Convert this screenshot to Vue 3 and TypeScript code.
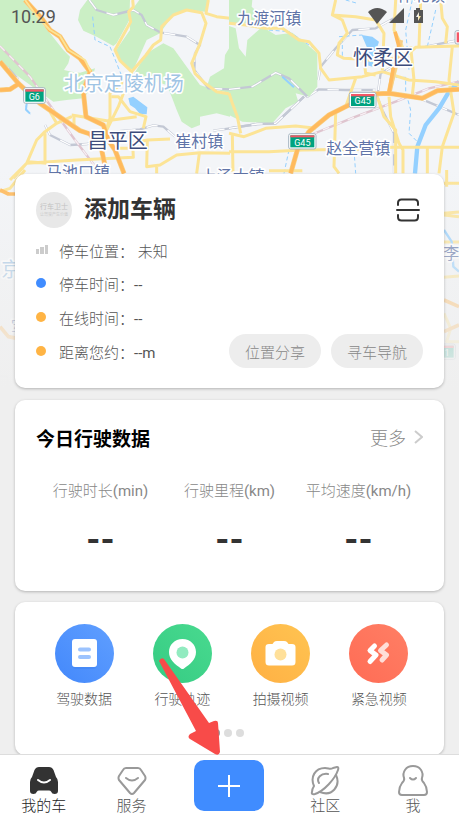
<script setup lang="ts">
interface StatusRow {
  label: string
  value: string
  mark: 'signal' | 'blue' | 'orange'
}

interface Metric {
  label: string
  unit: string
  value: string
}

const statusRows: StatusRow[] = [
  { label: '停车位置：', value: ' 未知', mark: 'signal' },
  { label: '停车时间：', value: '--', mark: 'blue' },
  { label: '在线时间：', value: '--', mark: 'orange' },
  { label: '距离您约：', value: '--m', mark: 'orange' },
]

const metrics: Metric[] = [
  { label: '行驶时长', unit: '(min)', value: '--' },
  { label: '行驶里程', unit: '(km)', value: '--' },
  { label: '平均速度', unit: '(km/h)', value: '--' },
]
</script>

<template>
  <div class="app">
    <svg class="map" viewBox="0 0 1377 1170" preserveAspectRatio="xMidYMin slice" aria-hidden="true">
      <defs>
        <linearGradient id="mapFade" x1="0" y1="0" x2="0" y2="1">
          <stop offset="0" stop-color="#efefef" stop-opacity="0" />
          <stop offset="0.5" stop-color="#efefef" stop-opacity="0.55" />
          <stop offset="1" stop-color="#efefef" />
        </linearGradient>
      </defs>
      <rect width="1377" height="1170" fill="#f3f5f8" />

      <!-- western half -->
      <g class="park">
        <path d="M0 0H75L108 48 150 100 190 150 210 170 205 190 192 210 215 215 240 218 285 205 278 232 262 280 250 295 200 300 160 305 0 190Z" />
        <path d="M262 0H390L388 60 350 130 340 138 290 110 250 92 234 60 240 30Z" />
        <path d="M418 0H625L615 35 560 30 515 50 480 100 440 120 400 210 375 200 345 155 390 90 388 40Z" />
        <path d="M490 130L520 145 560 200 600 255 690 285 690 350 650 340 600 350 600 375 575 385 545 365 530 330 515 290 500 255 400 225 440 160Z" />
        <path d="M690 140V280L620 262 630 230 672 205 675 165Z" />
      </g>
      <path class="lake" d="M385 295L400 290 442 322 440 343 420 342 405 325 390 315Z" />
      <path class="stream" d="M80 310L76 330 92 343M278 50L285 120 330 140 350 190 366 230" />
      <path class="stream thick" d="M80 312L78 328 90 341" />
      <g v-for="layer in ['rail', 'rail-gap']" :key="layer" :class="layer">
        <path d="M268 0L290 30 340 45 400 30 425 45 440 75 480 97 560 110 600 135 585 160 583 210 625 265 690 268" />
        <path d="M135 375L150 405 210 435 262 432 340 395 420 388 460 376 490 380 525 410M640 392L690 385M0 185L25 205 55 238" />
        <path transform="translate(687 0)" d="M0 268L70 260 140 218 180 235 235 290 270 268 350 270 440 270M0 385L85 372 140 370 225 290M268 240L275 200 320 145 370 90 440 85 500 52M500 195L455 220 445 290 460 330 495 400V520M560 290L690 345M590 140L690 120" />
      </g>
      <path class="dash-base" d="M0 138L90 230 160 330 225 420 290 505" />
      <path class="dash" d="M0 138L90 230 160 330 225 420 290 505" />
      <path class="road" d="M398 0L400 20 386 35 392 65 345 150 360 182 395 215 438 165 460 135 482 120 485 80 520 45 560 30 605 38 618 70 600 130 575 190 585 220 615 250 650 275 690 282M625 0L618 40 650 50 690 55M395 215L370 245 330 280 330 355 315 400M335 290H355L390 335 438 350 430 385M395 215L355 320 320 390M215 345L320 362 410 350M40 535L80 490 110 420 135 395 170 370 215 350M80 490L230 480 400 472 398 430 442 420 510 417M442 420L440 500 480 495 530 465 600 458 690 460M598 460L590 520M470 500V520M360 445H400M30 540L85 485 140 490M135 400V485M150 335L170 370M222 345V380" />
      <path class="highway casing" d="M75 0L125 55 150 90 180 110 205 150 240 175 270 215 250 275 258 350 310 375 325 420 345 450 372 520M0 185L55 250 120 310 200 365 240 392 270 402 305 450 320 520M0 270L30 268 55 252" />
      <path class="highway" d="M75 0L125 55 150 90 180 110 205 150 240 175 270 215 250 275 258 350 310 375 325 420 345 450 372 520M0 185L55 250 120 310 200 365 240 392 270 402 305 450 320 520M0 270L30 268 55 252" />
      <path class="road edge" d="M75 0L110 48 150 90 180 108 205 150 255 180 272 215" />

      <!-- eastern half -->
      <g transform="translate(687 0)">
        <g class="park">
          <path d="M0 0H70L68 20 95 45 75 70 0 70Z" />
          <path d="M0 78L20 85 30 145 50 170 55 120 100 80 140 105 190 98 225 125 265 160 265 260 240 290 200 280 208 305 170 325 130 370 40 365 0 345Z" />
        </g>
        <g class="rail"><path d="M0 268L70 260 140 218 180 235 235 290M0 385L85 372 140 370 225 290" /></g>
        <g class="rail-gap"><path d="M0 268L70 260 140 218 180 235 235 290M0 385L85 372 140 370 225 290" /></g>
        <path class="lake" d="M398 105L430 110 450 125 440 155 430 200 412 195 415 145Z" />
        <path class="river" d="M690 245L660 275 630 325 590 375 565 440 558 520" />
        <path class="stream" d="M500 232H530V275L545 330 540 400 570 430M120 90L180 95 270 155M340 115V175H400M330 110L400 105M620 30L595 140M550 0L530 90 540 210M350 0L385 10M180 450L165 520M375 450L380 520" />
        <path class="stream thick" d="M160 230L195 262" />
        <path class="dash-base" d="M245 405L380 350 500 305 600 265 690 245" />
        <path class="dash" d="M245 405L380 350 500 305 600 265 690 245" />
        <path class="road" d="M0 70L50 75 110 85 160 85 210 120 240 125 270 160 275 205 300 240 400 230 460 215 540 240 620 245 690 255M320 0L310 45 340 60 355 100 330 130 325 165 345 175 400 178 460 185 540 160 560 142 690 138M310 45L380 50 440 60 465 100 460 210M380 235L350 320M405 180L410 220 440 225M545 140L555 240 550 285M670 140L660 240 675 340 640 440 630 520M575 0L570 140M635 0L640 55 655 80 650 130M0 400L45 410 110 385 200 378 260 385M0 455H120L220 450 390 448 490 442 690 442M320 340L315 500 330 520M10 400L12 520M0 280L10 310 25 350 35 400M445 290L465 350 500 390V520M480 290L485 350 510 430 522 450V520M595 442V520M120 512H220" />
        <path class="road" d="M500 0L495 90 520 140 480 280" />
        <path class="highway casing" d="M185 520L205 450 240 395 300 345 370 310 430 282 480 280 580 295 625 272 690 268M515 120L480 280" />
        <path class="highway" d="M185 520L205 450 240 395 300 345 370 310 430 282 480 280 580 295 625 272 690 268M498 95L510 140M495 190L480 280" />
      </g>

      <!-- edges beside the vehicle card -->
      <path class="road" d="M0 575L30 565 75 510M1332 640L1377 636M1332 645L1377 650M1332 726H1377M1332 832L1377 828M1332 940L1352 985 1340 1025H1377M1340 510V560M1332 550H1377" />
      <path class="highway" d="M0 570L25 582 50 582M0 980L25 1010 50 1015M1332 900L1377 920M1332 995L1377 975" />
      <path class="river narrow" d="M1332 690L1355 725 1360 800 1377 815" />
      <g class="rail faint"><path d="M0 1128H22V1170" /></g>

      <g class="places">
        <text x="191" y="273" class="airport">北京定陵机场</text>
        <text x="263" y="445" class="district">昌平区</text>
        <text x="526" y="440" class="town">崔村镇</text>
        <text x="138" y="535" class="town">马池口镇</text>
        <text x="602" y="546" class="town">上汤大镇</text>
        <text x="712" y="73" class="town">九渡河镇</text>
        <text x="1192" y="3" class="town">怀北镇</text>
        <text x="1059" y="194" class="district">怀柔区</text>
        <text x="979" y="461" class="town">赵全营镇</text>
        <text x="1330" y="777" class="town">李</text>
        <text x="4" y="831" class="airport">京</text>
        <text x="32" y="998" class="town">军</text>
      </g>
      <g class="shields">
        <rect x="71" y="263" width="65" height="47" rx="6" />
        <path d="M76 268H131V305H76Z" /><path class="band" d="M76 268H131V275H76Z" />
        <text x="103" y="300">G6</text>
        <rect x="866" y="401" width="82" height="46" rx="6" />
        <path d="M871 406H943V442H871Z" /><path class="band" d="M871 406H943V412H871Z" />
        <text x="907" y="437">G45</text>
        <rect x="1048" y="277" width="80" height="46" rx="6" />
        <path d="M1053 282H1123V318H1053Z" /><path class="band" d="M1053 282H1123V289H1053Z" />
        <text x="1088" y="313">G45</text>
        <rect x="1318" y="1032" width="48" height="46" rx="6" />
        <path d="M1320 1037H1361V1073H1320Z" /><path class="band" d="M1320 1037H1361V1044H1320Z" />
        <text x="1341" y="1068">1</text>
        <rect x="1365" y="92" width="40" height="40" rx="6" />
        <path class="band" d="M1370 97H1400V127H1370Z" />
      </g>
      <rect y="510" width="1377" height="660" fill="url(#mapFade)" />
    </svg>

    <header class="status-bar">
      <time>10:29</time>
      <svg class="status-icons" width="57" height="18" viewBox="0 0 57 18" aria-hidden="true">
        <path d="M0 5Q9 -3 19 5L9 17Z" />
        <path d="M36 1V16H21Z" />
        <path fill-rule="evenodd" d="M48 1H52V3H55V16H46V3H48ZM51 5L48 10H50V14L53 9H51Z" />
      </svg>
    </header>

    <main class="content">
      <section class="card vehicle">
        <div class="vehicle-head">
          <span class="avatar"><b>行车卫士</b><small>让驾驶产生价值</small></span>
          <h1>添加车辆</h1>
          <button class="scan" type="button" aria-label="扫一扫">
            <svg width="24" height="24" viewBox="0 0 24 24">
              <path d="M2 7V5Q2 1.500 5.500 1.500H18.500Q22 1.500 22 5V7M1 12H23M2 17V19Q2 22.500 5.500 22.500H18.500Q22 22.500 22 19V17" />
            </svg>
          </button>
        </div>
        <div class="vehicle-body">
          <ul>
            <li v-for="row in statusRows" :key="row.label">
              <svg v-if="row.mark === 'signal'" class="signal" width="12" height="10" viewBox="0 0 12 10" aria-hidden="true">
                <path d="M0 4H3V9H0ZM4 2H8V9H4ZM9 0H12V9H9Z" />
              </svg>
              <i v-else class="dot" :class="row.mark"></i>
              <span class="row-text">{{ row.label }}<span :class="{ latin: row.mark !== 'signal' }">{{ row.value }}</span></span>
            </li>
          </ul>
          <div class="actions">
            <button type="button">位置分享</button>
            <button type="button">寻车导航</button>
          </div>
        </div>
      </section>

      <section class="card today">
        <div class="today-head">
          <h2>今日行驶数据</h2>
          <a href="#more">更多
            <svg width="9" height="14" viewBox="0 0 9 14" aria-hidden="true"><path d="M1 1L8 7 1 13" /></svg>
          </a>
        </div>
        <dl>
          <div v-for="metric in metrics" :key="metric.label">
            <dt>{{ metric.label }}<span class="latin">{{ metric.unit }}</span></dt>
            <dd>{{ metric.value }}</dd>
          </div>
        </dl>
      </section>

      <section class="card shortcuts">
        <div class="shortcut-list">
          <button type="button">
            <svg viewBox="0 0 59 59" aria-hidden="true">
              <defs><linearGradient id="blue" x1="0" y1="1" x2="1" y2="0"><stop stop-color="#4388fb" /><stop offset="1" stop-color="#609fff" /></linearGradient></defs>
              <circle cx="29.500" cy="29.500" r="29.500" fill="url(#blue)" />
              <rect x="17" y="16" width="25" height="29" rx="4" fill="#3d7fee" opacity=".4" />
              <rect x="17" y="15" width="25" height="28" rx="3" fill="#fff" />
              <path d="M25 25.500H34M25 33H34" stroke="#9cc3fe" stroke-width="4" stroke-linecap="round" />
            </svg>
            <span>驾驶数据</span>
          </button>
          <button type="button">
            <svg viewBox="0 0 59 59" aria-hidden="true">
              <defs><linearGradient id="green" x1="0" y1="1" x2="1" y2="0"><stop stop-color="#35cb83" /><stop offset="1" stop-color="#49da8f" /></linearGradient></defs>
              <circle cx="29.500" cy="29.500" r="29.500" fill="url(#green)" />
              <path d="M29.500 15C21.500 15 16 21 16 28C16 36 22 40 28 44.500Q29.500 45.500 31 44.500C37 40 43 36 43 28C43 21 37.500 15 29.500 15Z" fill="#fff" />
              <circle cx="29.500" cy="28.500" r="6" fill="#92ebc0" />
            </svg>
            <span>行驶轨迹</span>
          </button>
          <button type="button">
            <svg viewBox="0 0 59 59" aria-hidden="true">
              <defs><linearGradient id="amber" x1="0" y1="1" x2="1" y2="0"><stop stop-color="#ffb044" /><stop offset="1" stop-color="#ffc451" /></linearGradient></defs>
              <circle cx="29.500" cy="29.500" r="29.500" fill="url(#amber)" />
              <path d="M18 20H21.500L23 18Q24 17 26 17H33Q35 17 36 18L37.500 20H41Q44.500 20 44.500 23V38Q44.500 41.500 41 41.500H18Q14.500 41.500 14.500 38V23Q14.500 20 18 20Z" fill="#fff" />
              <circle cx="29.500" cy="30.500" r="6" fill="#ffe09a" />
            </svg>
            <span>拍摄视频</span>
          </button>
          <button type="button">
            <svg viewBox="0 0 59 59" aria-hidden="true">
              <defs><linearGradient id="coral" x1="0" y1="1" x2="1" y2="0"><stop stop-color="#ff6c55" /><stop offset="1" stop-color="#ff7f65" /></linearGradient></defs>
              <circle cx="29.500" cy="29.500" r="29.500" fill="url(#coral)" />
              <g fill="none" stroke-width="5" stroke-linecap="round" stroke-linejoin="round">
                <path d="M25.500 22L21 26.500 27 31 21 37.500" stroke="#fff" />
                <path d="M37.500 21L31.500 26.500 37.500 31 33 36" stroke="#ffded8" />
              </g>
            </svg>
            <span>紧急视频</span>
          </button>
        </div>
        <div class="pager"><i class="current"></i><i></i><i></i></div>
      </section>
    </main>

    <nav class="tabs">
      <a href="#car" class="active">
        <svg width="30" height="30" viewBox="0 0 30 30" aria-hidden="true">
          <path d="M10 1H20Q23 1 24.500 4L27 11Q29 13 29 16V25Q29 28 25.500 28Q23 28 22 25.500Q21.500 24.500 20 24.500H10Q8.500 24.500 8 25.500Q7 28 4.500 28Q1 28 1 25V16Q1 13 3 11L5.500 4Q7 1 10 1Z" fill="#333" />
          <path d="M9 14Q15 19 21 14" fill="none" stroke="#fff" stroke-width="2" stroke-linecap="round" />
        </svg>
        <span>我的车</span>
      </a>
      <a href="#service">
        <svg class="line" width="30" height="30" viewBox="0 0 30 30" aria-hidden="true">
          <path d="M9 2H21Q23 2 24 4L28 10Q29 12 28 14L17 27Q15 29 13 27L2 14Q1 12 2 10L6 4Q7 2 9 2Z" />
          <path d="M9 12Q15 17 21 12" />
        </svg>
        <span>服务</span>
      </a>
      <button class="add" type="button" aria-label="添加">
        <svg width="24" height="24" viewBox="0 0 24 24"><path d="M12 1V23M1 12H23" /></svg>
      </button>
      <a href="#community">
        <svg class="line" width="30" height="30" viewBox="0 0 30 30" aria-hidden="true">
          <path d="M4 20C0 11 5 2 15 2C19 2 20 4 23 2L27 1Q29 1 28 4C25 13 14 25 5 28Q1 29 2 26Q2 23 4 20Z" />
          <path d="M26 9C31 20 22 31 10 26M9 17C6 12 11 7 18 8" />
        </svg>
        <span>社区</span>
      </a>
      <a href="#me">
        <svg class="line" width="30" height="31" viewBox="0 0 30 31" aria-hidden="true">
          <path d="M15 1C8 1 4 7 6 13Q7 15 4 18Q1 22 1 27Q1 30 4 30H26Q29 30 29 27Q29 22 26 18Q23 15 24 13C26 7 22 1 15 1Z" />
          <path d="M12 13Q15 16 18 13" />
        </svg>
        <span>我</span>
      </a>
    </nav>

    <svg class="pointer" width="64" height="98" viewBox="0 0 64 98" aria-hidden="true">
      <path d="M1 3Q3 -1 6 1L51 65 56 63Q60 62 60 65L62 94Q61 98 57 96L32 81Q29 79 32 76L38 73Z" />
    </svg>
  </div>
</template>

<style>
body {
  margin: 0;
  background: #efefef;
}
</style>

<style scoped>
.app {
  position: relative;
  display: flex;
  flex-direction: column;
  height: 100vh;
  overflow: hidden;
  background: #efefef;
  color: #555;
  font-family: Roboto, "Noto Sans CJK SC", sans-serif;
  font-size: 15px;
  font-weight: 300;
}
button {
  padding: 0;
  border: 0;
  background: none;
  color: inherit;
  font: inherit;
}
a {
  color: inherit;
  text-decoration: none;
}
h1, h2, ul, dl, dd {
  margin: 0;
  padding: 0;
}
.latin { font-weight: 400; }

.map {
  position: absolute;
  top: 0;
  left: 0;
  width: 100%;
  height: 390px;
}
.map path { fill: none; stroke-linejoin: round; }
.map .park path { fill: #cbefc5; }
.map .lake { fill: #94d0ff; }
.map .river { stroke: #94d0ff; stroke-width: 13; }
.map .river.narrow { stroke-width: 7; }
.map .stream { stroke: #94d0ff; stroke-width: 3; stroke-dasharray: 12 8; }
.map .stream.thick { stroke-width: 6; stroke-dasharray: none; }
.map .rail path { stroke: #c3c8d4; stroke-width: 7; }
.map .rail-gap path { stroke: #fff; stroke-width: 4; stroke-dasharray: 34 34; }
.map .rail.faint path { stroke: #e4e6ea; stroke-width: 4; }
.map .road { stroke: #fce496; stroke-width: 9; }
.map .road.edge { stroke-width: 6; }
.map .highway { stroke: #ffba5d; stroke-width: 11; }
.map .highway.casing { stroke: #f8cf85; stroke-width: 15; }
.map .dash-base { stroke: #dfc5cf; stroke-width: 7; }
.map .dash { stroke: #f6f0f4; stroke-width: 4; stroke-dasharray: 20 20; }
.places text {
  stroke: #fff;
  stroke-width: 10px;
  stroke-linejoin: round;
  paint-order: stroke;
  font-weight: 400;
}
.places .airport { font-size: 60px; fill: #9fc4e4; }
.places .district { font-size: 60px; fill: #3c4c7c; }
.places .town { font-size: 48px; fill: #6074a8; }
.shields rect { fill: #fff; stroke: #a5b5c0; stroke-width: 3; }
.shields path { fill: #00a27f; }
.shields .band { fill: #f35766; }
.shields text { fill: #fff; font-size: 27px; font-weight: 400; text-anchor: middle; }

.status-bar {
  position: relative;
  display: flex;
  flex: none;
  align-items: center;
  justify-content: space-between;
  height: 32px;
  padding: 0 34px 0 11px;
  color: #555;
  font-size: 18px;
  font-weight: 400;
}
.status-icons { fill: #555; }

.content {
  position: relative;
  flex: 1;
  min-height: 0;
  overflow: hidden;
  padding: 142px 15px 0;
}
.card {
  box-sizing: border-box;
  margin-bottom: 12px;
  padding: 18px 21px 20px;
  border-radius: 10px;
  background: #fff;
  box-shadow: 0 1px 3px rgba(0, 0, 0, 0.25);
}

.vehicle-head {
  display: flex;
  align-items: center;
  height: 36px;
  margin-bottom: 6px;
}
.avatar {
  display: flex;
  flex-direction: column;
  align-items: center;
  justify-content: center;
  width: 36px;
  height: 36px;
  overflow: hidden;
  border-radius: 50%;
  background: #e8e8e8;
  color: #c2c2c2;
  white-space: nowrap;
}
.avatar b { font-size: 7px; font-weight: 400; line-height: 9px; }
.avatar small { font-size: 4px; line-height: 6px; }
h1 {
  margin-left: 12px;
  color: #333;
  font-size: 23px;
  font-weight: 700;
  line-height: 36px;
}
.scan {
  width: 24px;
  height: 24px;
  margin-left: auto;
  margin-right: 3px;
}
.scan svg {
  display: block;
  fill: none;
  stroke: #333;
  stroke-width: 2;
  stroke-linecap: round;
}
.vehicle-body {
  display: flex;
  align-items: flex-end;
  justify-content: space-between;
}
.vehicle-body ul { list-style: none; }
.vehicle-body li {
  display: flex;
  align-items: center;
  height: 34px;
}
.vehicle-body li:first-child { height: 32px; }
.row-text {
  margin-left: 12px;
  white-space: pre;
}
.dot {
  width: 10px;
  height: 10px;
  margin-right: 1px;
  border-radius: 50%;
}
.dot.blue { background: #408cff; }
.dot.orange { background: #ffb444; }
.signal { fill: #ccc; margin-right: -1px; }
.actions {
  display: flex;
  gap: 10px;
}
.actions button {
  height: 34px;
  padding: 0 16px;
  border-radius: 17px;
  background: #ededed;
  color: #888;
}

.today {
  height: 191px;
  margin-bottom: 11px;
}
.today-head {
  display: flex;
  align-items: center;
  justify-content: space-between;
  height: 38px;
}
h2 {
  color: #000;
  font-size: 19px;
  font-weight: 700;
}
.today-head a {
  display: flex;
  align-items: center;
  gap: 8px;
  color: #888;
  font-size: 18px;
}
.today-head svg {
  fill: none;
  stroke: #ccc;
  stroke-width: 2;
}
dl {
  display: grid;
  grid-template-columns: repeat(3, 1fr);
  margin-top: 24px;
  text-align: center;
}
dt {
  color: #888;
  line-height: 22px;
  white-space: nowrap;
}
dd {
  margin-top: 17px;
  color: #333;
  font-size: 36px;
  font-weight: 700;
  line-height: 42px;
}

.shortcuts {
  height: 153px;
  padding: 22px 16px 0 20px;
}
.shortcut-list {
  display: grid;
  grid-template-columns: repeat(4, 1fr);
}
.shortcut-list button {
  display: flex;
  flex-direction: column;
  align-items: center;
  gap: 6px;
  font-size: 14px;
  line-height: 20px;
}
.shortcut-list svg {
  width: 59px;
  height: 59px;
}
.pager {
  display: flex;
  justify-content: center;
  gap: 4px;
  margin-top: 20px;
  padding-right: 8px;
}
.pager i {
  width: 8px;
  height: 8px;
  border-radius: 50%;
  background: #ddd;
}
.pager .current { background: #999; }

.tabs {
  position: relative;
  display: flex;
  flex: none;
  box-sizing: border-box;
  height: 62px;
  padding-right: 2px;
  border-top: 1px solid #ddd;
  background: #fff;
}
.tabs a {
  display: flex;
  flex: 1;
  flex-direction: column;
  align-items: center;
  justify-content: flex-end;
  line-height: 20px;
}
.tabs .active { color: #222; }
.line {
  fill: none;
  stroke: #999;
  stroke-width: 2;
  stroke-linecap: round;
  stroke-linejoin: round;
}
.add {
  flex: none;
  width: 70px;
  height: 51px;
  margin: 5px 18px 0;
  border-radius: 10px;
  background: #408cff;
}
.add svg {
  display: block;
  margin: 0 auto;
  fill: none;
  stroke: #fff;
  stroke-width: 2;
}

.pointer {
  position: absolute;
  bottom: 60px;
  left: 158px;
  fill: #f84b49;
  pointer-events: none;
}
</style>
